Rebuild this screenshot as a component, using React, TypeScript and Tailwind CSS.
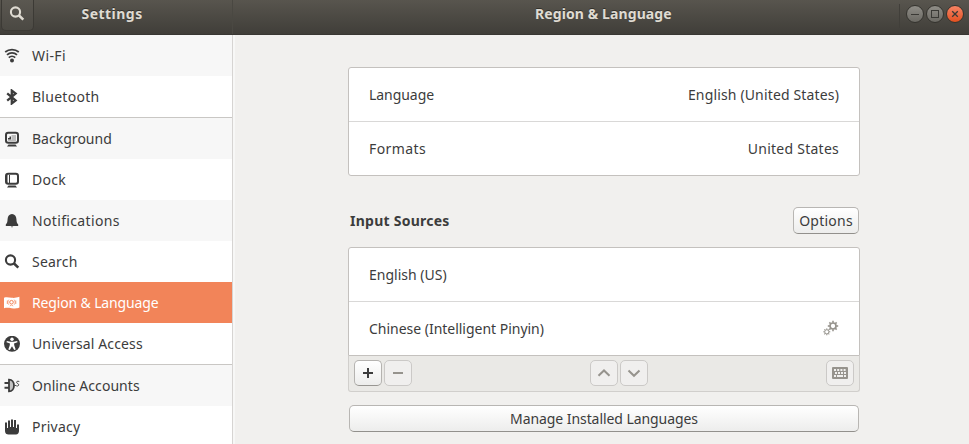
import React from 'react';
import clsx from 'clsx';

const Svg = ({ w = 16, h = 16, children, className }: { w?: number; h?: number; children: React.ReactNode; className?: string }) => (
  <svg width={w} height={h} viewBox={`0 0 ${w} ${h}`} fill="none" className={clsx('shrink-0', className)}>
    {children}
  </svg>
);

const WifiIcon = () => (
  <Svg>
    <circle cx="8" cy="12.6" r="2" fill="currentColor" />
    <path d="M1.2 4C5 .9 11 .9 14.800 4M3 6.800c2.800-2.600 7.200-2.600 10 0M4.800 9.600c1.800-1.700 4.600-1.700 6.400 0" stroke="currentColor" strokeWidth="1.8" />
  </Svg>
);
const BluetoothIcon = () => (
  <Svg>
    <path d="M3.200 4.400l8.400 7-3.800 3V1.600l3.800 3-8.400 7" stroke="currentColor" strokeWidth="2.300" />
  </Svg>
);
const Monitor = ({ children }: { children: React.ReactNode }) => (
  <Svg>
    {children}
    <rect x="2" y="1.800" width="12" height="10" rx="2.200" stroke="currentColor" strokeWidth="2" />
    <path d="M4.500 13.600h7l1.500 1.900H3z" fill="currentColor" />
  </Svg>
);
const BackgroundIcon = () => (
  <Monitor>
    <path d="M7.500 4H12v6H4V8.800h3.500z" fill="#bcbcbc" />
    <path d="M4 8.400V7h1.500V5.500H7v2.900z" fill="currentColor" />
  </Monitor>
);
const DockIcon = () => (
  <Monitor>
    <path d="M3.500 3v8" stroke="#9a9a9a" strokeWidth="1" />
    <path d="M5.500 3v8" stroke="currentColor" strokeWidth="1" />
  </Monitor>
);
const BellIcon = () => (
  <Svg>
    <path d="M8 1c2.800.3 4.200 2.200 4.400 5 .1 3 .6 4.500 1.800 5.400V13H1.800v-1.600c1.200-.9 1.700-2.400 1.800-5.400.2-2.800 1.600-4.700 4.400-5z" fill="currentColor" />
    <path d="M6.700 13.400h2.600L8 14.600z" fill="currentColor" />
  </Svg>
);
const SearchIcon = () => (
  <Svg>
    <circle cx="6.500" cy="6" r="4.600" stroke="currentColor" strokeWidth="2.100" />
    <path d="M9.800 9.300l4.500 4.300" stroke="currentColor" strokeWidth="2.600" />
  </Svg>
);
const RegionIcon = () => (
  <Svg>
    <path d="M0 2.800c2.500-1 4.600-.3 7.600 0s4.600 0 7.800-1v10.800c-3 1.200-4.800 1-7.800.6s-4.900-.6-7.600 0z" fill="white" />
    <circle cx="7.500" cy="7.200" r="1.800" stroke="#f28459" />
    <path d="M4.800 4.700c-1.300 1.500-1.300 3.500 0 5M10.200 4.700c1.300 1.500 1.300 3.500 0 5M3.300 5.500V9M11.800 5.500V9M5.800 11l1.700-1 1.700 1" stroke="#f28459" strokeWidth=".7" />
  </Svg>
);
const AccessIcon = () => (
  <Svg>
    <circle cx="8" cy="7.800" r="8" fill="currentColor" />
    <circle cx="8" cy="3.200" r="1.700" fill="white" />
    <path d="M2.800 5l3.700.800h3L13.200 5l.300 1.300L10 7.500l.300 2 1.400 4-1.500.5L8 10.300 5.800 14l-1.500-.5 1.400-4 .3-2-3.500-1.200z" fill="white" />
  </Svg>
);
const PlugIcon = () => (
  <Svg>
    <path d="M.5 4H5v2H.5zM.5 8.700H5v2H.5z" fill="currentColor" />
    <path d="M5 1.600v11.800C8 13.400 10 11 10 7.500S8 1.600 5 1.600z" fill="#c4c4c4" stroke="currentColor" strokeWidth="1.800" />
    <path d="M10.800 7.500h1.400M15.300 3.500c-2-.7-3 0-2.600 1.200.4 1 2 .9 2 2.100s-1.300 1.500-2.400 1.100" stroke="currentColor" strokeWidth=".9" />
  </Svg>
);
const HandIcon = () => (
  <Svg>
    <path d="M1 3.500h2V9h1V1.500h2V8h1V.600h2V8h1V1h2v8h1V5.500h2V12c0 2-1.200 3.400-3 3.400H4.500C2.500 15.400 1 14.500 1 12z" fill="currentColor" />
  </Svg>
);

const items = [
  { label: 'Wi-Fi', icon: <WifiIcon />, track: 'tracking-[0.4px]', shade: true },
  { label: 'Bluetooth', icon: <BluetoothIcon />, track: 'tracking-[0.27px]', end: true },
  { label: 'Background', icon: <BackgroundIcon />, track: 'tracking-[0.02px]', shade: true },
  { label: 'Dock', icon: <DockIcon />, track: 'tracking-[0.3px]' },
  { label: 'Notifications', icon: <BellIcon />, track: 'tracking-[0.35px]', shade: true },
  { label: 'Search', icon: <SearchIcon />, track: 'tracking-[0.2px]' },
  { label: 'Region & Language', icon: <RegionIcon />, track: 'tracking-[-0.15px]', active: true },
  { label: 'Universal Access', icon: <AccessIcon />, track: 'tracking-[0.12px]', end: true },
  { label: 'Online Accounts', icon: <PlugIcon />, track: 'tracking-[0.05px]', shade: true },
  { label: 'Privacy', icon: <HandIcon />, track: 'tracking-[0.25px]' },
];

const ToolButton = ({ enabled, children, className }: { enabled?: boolean; children: React.ReactNode; className?: string }) => (
  <button
    className={clsx(
      'flex h-[26px] w-7 items-center justify-center rounded-[5px] border',
      enabled ? 'border-[#b5b3b0] border-b-[#989692] bg-linear-to-b from-white to-[#ededec] text-[#3c3c3c]' : 'border-[#cbc9c7] bg-[#f0efee] text-[#96938d]',
      className,
    )}
  >
    {children}
  </button>
);

const raised = 'flex h-[27px] items-center justify-center rounded-[5px] border border-[#b8b6b3] border-b-[#92908c] bg-linear-to-b from-white to-[#ededec]';

const WindowButton = ({ close, children }: { close?: boolean; children: React.ReactNode }) => (
  <button
    className={clsx(
      'flex size-[18px] items-center justify-center rounded-full border border-[#35342f] bg-linear-to-b text-[#3a3935]',
      close ? 'from-[#f68363] to-[#e2501d]' : 'from-[#8f8d87] to-[#6b6963]',
    )}
  >
    {children}
  </button>
);

const teeth = [0, 45, 90, 135, 180, 225, 270, 315];

export default function App() {
  return (
    <div className="flex h-[444px] w-[969px] flex-col overflow-hidden bg-[#f1f0ee] font-['Noto_Sans',sans-serif] text-[14px] leading-5 text-[#3c3c3c]">
      <header className="flex h-[35px] shrink-0 border-b border-[#393733] bg-linear-to-b from-[#58554e] to-[#403e39] font-bold text-[#dfdbd2]">
        <div className="flex w-[233px] shrink-0 border-r border-[#4a4842]">
          <button className="ml-px flex h-[31px] w-[33px] rounded-b-[5px] border border-t-0 border-[#3c3a35] bg-linear-to-b from-[#5b5851] to-[#4b4943] pl-[7px] pt-1.5">
            <SearchIcon />
          </button>
          <h1 className="ml-[47.500px] mt-[4px] tracking-[0.47px] [text-shadow:0_-1px_#33312c]">Settings</h1>
        </div>
        <h2 className="ml-[302px] mt-[4px] w-[364px] tracking-[0.1px] [text-shadow:0_-1px_#33312c]">Region &amp; Language</h2>
        <div className="mt-1 h-6 w-[7px] border-l border-[#413f3a]" />
        <div className="mt-[5px] flex gap-[2px]">
          <WindowButton>
            <Svg><path d="M4 8.500h8" stroke="currentColor" /></Svg>
          </WindowButton>
          <WindowButton>
            <Svg><rect x="4.500" y="4.500" width="7" height="7" stroke="currentColor" /></Svg>
          </WindowButton>
          <WindowButton close>
            <Svg><path d="M5.200 5.200l5.600 5.600M10.800 5.200l-5.600 5.600" stroke="currentColor" strokeWidth="1.300" /></Svg>
          </WindowButton>
        </div>
      </header>

      <div className="flex h-[409px]">
        <nav className="w-[233px] shrink-0 overflow-hidden border-r border-[#d6d4d2] bg-white">
          {items.map((it) => (
            <div
              key={it.label}
              className={clsx(
                'flex items-center gap-3 pl-1',
                it.end ? 'h-[42px] border-b border-[#c9c7c4]' : 'h-[41px]',
                it.active ? 'bg-[#f28459] text-white' : it.shade ? 'bg-[#f7f7f7]' : 'bg-white',
              )}
            >
              {it.icon}
              <span className={it.track}>{it.label}</span>
            </div>
          ))}
        </nav>
        <div className="w-[2px] bg-[#f7f7f6]" />

        <main className="ml-[113px] mt-8 w-[512px]">
          <section className="rounded-[3px] border border-[#c4c1be] bg-white">
            <div className="flex h-[54px] items-center justify-between border-b border-[#d9d8d7] pl-5 pr-5 pt-px">
              <span className="tracking-[-0.05px]">Language</span>
              <span className="tracking-[0.15px]">English (United States)</span>
            </div>
            <div className="flex h-[53px] items-center justify-between pl-5 pr-5 pt-px">
              <span className="tracking-[0.4px]">Formats</span>
              <span className="tracking-[0.25px]">United States</span>
            </div>
          </section>

          <div className="mt-[31px] flex items-center justify-between pl-[2px] pr-px">
            <h3 className="font-bold tracking-[0.25px]">Input Sources</h3>
            <button className={clsx(raised, 'w-[66px] tracking-[0.23px]')}>Options</button>
          </div>

          <section className="mt-[13px] rounded-t-[3px] border border-[#c4c1be] bg-white">
            <div className="flex h-[54px] items-center border-b border-[#d9d8d7] pl-5 pt-px">English (US)</div>
            <div className="flex h-[53px] items-center justify-between pl-5 pr-5 pt-px">
              <span className="tracking-[-0.02px]">Chinese (Intelligent Pinyin)</span>
              <Svg className="mb-[2px] text-[#96938d]">
                <circle cx="10" cy="6" r="3" stroke="currentColor" strokeWidth="1.700" />
                {teeth.map((a) => <path key={a} d="M10 .800v2" stroke="currentColor" strokeWidth="1.600" transform={`rotate(${a} 10 6)`} />)}
                <circle cx="3.800" cy="11.800" r="2.100" stroke="currentColor" strokeWidth="1" />
                {teeth.map((a) => <path key={a} d="M3.800 8.300v1.300" stroke="currentColor" strokeWidth="1" transform={`rotate(${a} 3.800 11.800)`} />)}
              </Svg>
            </div>
          </section>
          <div className="flex h-9 items-start rounded-b-[3px] border border-t-0 border-[#d1cfcc] bg-[#eae9e6] pl-[5px] pt-1">
            <ToolButton enabled><Svg><path d="M3 8h10M8 3v10" stroke="currentColor" strokeWidth="2" /></Svg></ToolButton>
            <ToolButton className="ml-0.5"><Svg><path d="M3 8h10" stroke="currentColor" strokeWidth="2" /></Svg></ToolButton>
            <ToolButton className="ml-[178px]"><Svg><path d="M2.500 10.800L8 5.500l5.500 5.300" stroke="currentColor" strokeWidth="2" /></Svg></ToolButton>
            <ToolButton className="ml-0.5"><Svg><path d="M2.500 5.500L8 10.800l5.500-5.300" stroke="currentColor" strokeWidth="2" /></Svg></ToolButton>
            <ToolButton className="ml-[178px]">
              <Svg>
                <rect x="0" y="2" width="16" height="12" rx="1" fill="currentColor" />
                <path d="M2 5h12" stroke="#f0efee" strokeWidth="2" strokeDasharray="2 1.200" />
                <path d="M3 8h11" stroke="#f0efee" strokeWidth="2" strokeDasharray="2 1" />
                <path d="M2 11h2M5 11h6M12 11h2" stroke="#f0efee" strokeWidth="2" />
              </Svg>
            </ToolButton>
          </div>

          <button className={clsx(raised, 'ml-px mt-[13px] w-[510px] tracking-[-0.07px]')}>Manage Installed Languages</button>
        </main>
      </div>
    </div>
  );
}
